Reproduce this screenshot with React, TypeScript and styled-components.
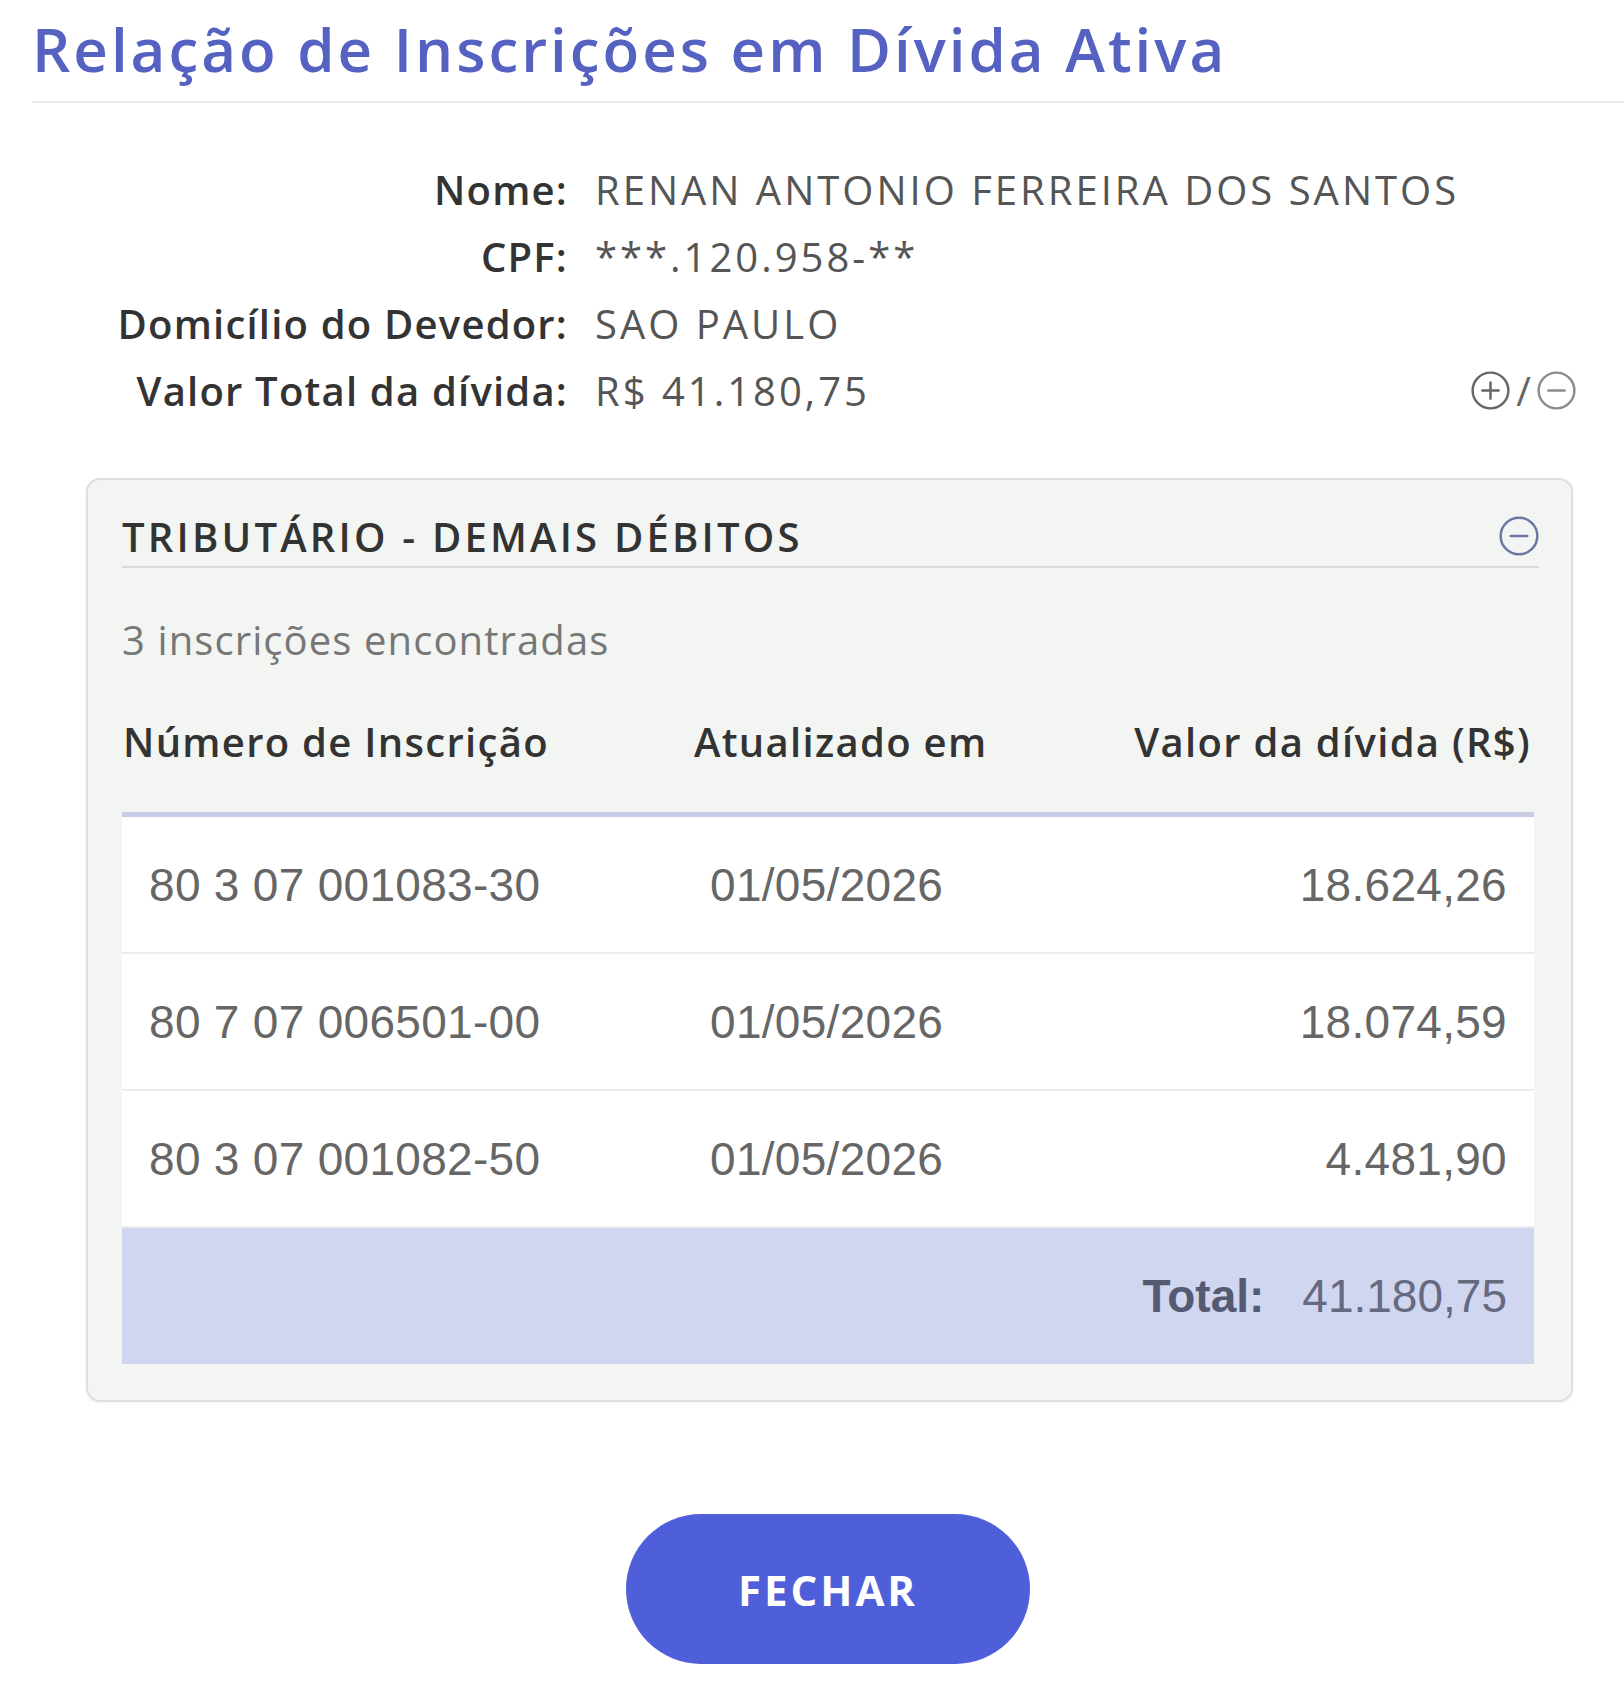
import styled, { createGlobalStyle } from "styled-components";

const GlobalStyle = createGlobalStyle`
  body {
    margin: 0;
    background: #ffffff;
    font-family: "Open Sans", "Noto Sans", sans-serif;
  }
`;

const rows = [
  { numero: "80 3 07 001083-30", data: "01/05/2026", valor: "18.624,26" },
  { numero: "80 7 07 006501-00", data: "01/05/2026", valor: "18.074,59" },
  { numero: "80 3 07 001082-50", data: "01/05/2026", valor: "4.481,90" },
];

function CircleIcon({ plus, size, color }: { plus?: boolean; size: number; color: string }) {
  return (
    <svg width={size} height={size} viewBox="0 0 24 24" fill="none" stroke={color} strokeWidth="1.5" strokeLinecap="round">
      <circle cx="12" cy="12" r="11" />
      <line x1="7" y1="12" x2="17" y2="12" />
      {plus && <line x1="12" y1="7" x2="12" y2="17" />}
    </svg>
  );
}

export default function App() {
  return (
    <Page>
      <GlobalStyle />
      <Title>Relação de Inscrições em Dívida Ativa</Title>
      <Divider />

      <Info>
        <InfoRow>
          <Label>Nome:</Label>
          <Value>RENAN ANTONIO FERREIRA DOS SANTOS</Value>
        </InfoRow>
        <InfoRow>
          <Label>CPF:</Label>
          <Value>***.120.958-**</Value>
        </InfoRow>
        <InfoRow>
          <Label>Domicílio do Devedor:</Label>
          <Value>SAO PAULO</Value>
        </InfoRow>
        <InfoRow>
          <Label>Valor Total da dívida:</Label>
          <Value>R$ 41.180,75</Value>
          <Toggles>
            <CircleIcon plus size={39} color="#666666" />
            <Slash>/</Slash>
            <CircleIcon size={39} color="#8c8c8c" />
          </Toggles>
        </InfoRow>
      </Info>

      <Card>
        <CardHeader>
          <span>TRIBUTÁRIO - DEMAIS DÉBITOS</span>
          <CircleIcon size={40} color="#6d76a8" />
        </CardHeader>
        <Count>3 inscrições encontradas</Count>

        <Table>
          <thead>
            <tr>
              <Th $pad="0 0 0 1px">Número de Inscrição</Th>
              <Th $pad="0 0 0 11px">Atualizado em</Th>
              <Th $pad="0 3px 0 0" $right>
                Valor da dívida (R$)
              </Th>
            </tr>
          </thead>
          <tbody>
            {rows.map((r) => (
              <tr key={r.numero}>
                <Td>{r.numero}</Td>
                <Td>{r.data}</Td>
                <Td $right>{r.valor}</Td>
              </tr>
            ))}
            <tr>
              <TotalCell colSpan={3}>
                <TotalLabel>Total:</TotalLabel>
                41.180,75
              </TotalCell>
            </tr>
          </tbody>
        </Table>
      </Card>

      <Actions>
        <CloseButton>FECHAR</CloseButton>
      </Actions>
    </Page>
  );
}

const Page = styled.div`
  padding: 13px 0 40px 32px;
`;

const Title = styled.h1`
  margin: 0;
  font-size: 60px;
  line-height: 72px;
  font-weight: 600;
  color: #5562c2;
  letter-spacing: 3px;
`;

const Divider = styled.div`
  margin-top: 16px;
  border-bottom: 2px solid #e9eaea;
`;

const Info = styled.div`
  padding-top: 53px;
  padding-right: 48px;
`;

const InfoRow = styled.div`
  display: flex;
  align-items: center;
  height: 67px;
  font-size: 40px;
`;

const Label = styled.div`
  width: 536px;
  text-align: right;
  font-weight: 600;
  color: #333333;
  letter-spacing: 1.2px;
  margin-right: 27px;
`;

const Value = styled.div`
  flex: 1;
  color: #555555;
  letter-spacing: 3px;
`;

const Toggles = styled.div`
  display: flex;
  align-items: center;
  gap: 6px;
`;

const Slash = styled.span`
  font-size: 40px;
  color: #666666;
`;

const Card = styled.div`
  margin: 54px 51px 0 54px;
  padding: 30px 32px 36px 34px;
  background: #f2f5f1;
  border: 2px solid #dcdfdc;
  border-radius: 14px;
  box-shadow: 0 1px 4px rgba(0, 0, 0, 0.05);
`;

const CardHeader = styled.div`
  display: flex;
  justify-content: space-between;
  align-items: center;
  height: 52px;
  padding-bottom: 4px;
  border-bottom: 2px solid #d8dbd8;
  font-size: 40px;
  font-weight: 600;
  color: #333333;
  letter-spacing: 3.2px;
`;

const Count = styled.div`
  margin-top: 47px;
  line-height: 50px;
  font-size: 40px;
  color: #777777;
  letter-spacing: 1.1px;
`;

const Table = styled.table`
  width: calc(100% - 5px);
  margin-top: 52px;
  border-collapse: collapse;
  border-spacing: 0;

  thead tr {
    border-bottom: 5px solid #c9cde6;
  }

  tbody tr {
    background: #ffffff;
    border-bottom: 2px solid #ebeceb;
  }

  tbody tr:last-child {
    border-bottom: none;
  }
`;

const Th = styled.th<{ $pad: string; $right?: boolean }>`
  text-align: ${(p) => (p.$right ? "right" : "left")};
  padding: ${(p) => p.$pad};
  height: 95px;
  vertical-align: top;
  line-height: 50px;
  font-size: 40px;
  font-weight: 600;
  color: #333333;
  letter-spacing: 1.3px;

  &:first-child {
    width: 560px;
  }
  &:nth-child(2) {
    width: 420px;
  }
`;

const Td = styled.td<{ $right?: boolean }>`
  text-align: ${(p) => (p.$right ? "right" : "left")};
  height: 135px;
  padding: 0 27px;
  font-family: "Liberation Sans", Arial, sans-serif;
  font-size: 46px;
  color: #666666;
  letter-spacing: 0.3px;
`;

const TotalCell = styled.td`
  height: 136px;
  padding: 0 27px;
  text-align: right;
  background: #d0d5f0;
  font-family: "Liberation Sans", Arial, sans-serif;
  font-size: 46px;
  color: #656a80;
`;

const TotalLabel = styled.span`
  font-weight: 700;
  color: #555a72;
  margin-right: 38px;
`;

const Actions = styled.div`
  display: flex;
  justify-content: center;
  margin-top: 112px;
`;

const CloseButton = styled.button`
  width: 404px;
  height: 150px;
  border: none;
  border-radius: 75px;
  background: #4f5fda;
  color: #ffffff;
  font-family: "Open Sans", sans-serif;
  font-size: 42px;
  font-weight: 700;
  letter-spacing: 3px;
  cursor: pointer;
`;
